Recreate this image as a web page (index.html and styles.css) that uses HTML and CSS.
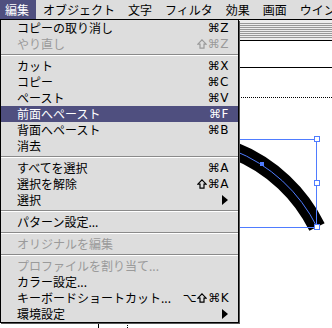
FILE: index.html
```html
<!DOCTYPE html>
<html lang="ja">
<head>
<meta charset="utf-8">
<link rel="stylesheet" href="styles.css">
</head>
<body>
<div class="screen">
  <div class="menubar">
    <span class="mb-item active">編集</span>
    <span class="mb-item">オブジェクト</span>
    <span class="mb-item">文字</span>
    <span class="mb-item">フィルタ</span>
    <span class="mb-item">効果</span>
    <span class="mb-item">画面</span>
    <span class="mb-item">ウインドウ</span>
  </div>

  <svg class="canvas" width="332" height="328" viewBox="0 0 332 328">
    <rect x="0" y="20" width="332" height="21" fill="#eeeeee"/>
    <g fill="#999999">
      <rect x="0" y="23" width="332" height="1"/>
      <rect x="0" y="25" width="332" height="1"/>
      <rect x="0" y="27" width="332" height="1"/>
      <rect x="0" y="29" width="332" height="1"/>
      <rect x="0" y="31" width="332" height="1"/>
      <rect x="0" y="33" width="332" height="1"/>
      <rect x="0" y="35" width="332" height="1"/>
      <rect x="0" y="37" width="332" height="1"/>
    </g>
    <rect x="0" y="40" width="332" height="1" fill="#000"/>
    <rect x="98" y="67" width="234" height="1" fill="#000"/>
    <rect x="98" y="67" width="1" height="261" fill="#000"/>
    <line x1="127" y1="97.5" x2="332" y2="97.5" stroke="#000" stroke-width="1" stroke-dasharray="1 1"/>
    <line x1="127.5" y1="97" x2="127.5" y2="328" stroke="#000" stroke-width="1" stroke-dasharray="1 1"/>
    <path d="M120 149.3 A158 158 0 0 1 317 227" fill="none" stroke="#000" stroke-width="17" stroke-linecap="butt"/>
    <rect x="60.5" y="139.5" width="256" height="88" fill="none" stroke="#4f7cff" stroke-width="1"/>
    <path d="M120 149.3 A158 158 0 0 1 317 227" fill="none" stroke="#4f7cff" stroke-width="1"/>
    <rect x="260" y="162" width="4" height="4" fill="#4f7cff"/>
    <g fill="#fff" stroke="#4f7cff" stroke-width="1">
      <rect x="314.5" y="136.5" width="5" height="5"/>
      <rect x="314.5" y="180.5" width="5" height="5"/>
      <rect x="314.5" y="224.5" width="5" height="5"/>
    </g>
  </svg>

  <div class="menu">
    <div class="item"><span>コピーの取り消し</span><span class="key">⌘Z</span></div>
    <div class="item dis"><span>やり直し</span><span class="key"><svg class="shift" width="10" height="10" viewBox="0 0 10 10"><path d="M5 0.8 L9.2 5.2 L7 5.2 L7 9.2 L3 9.2 L3 5.2 L0.8 5.2 Z"/></svg>⌘Z</span></div>
    <div class="sep"></div>
    <div class="item"><span>カット</span><span class="key">⌘X</span></div>
    <div class="item"><span>コピー</span><span class="key">⌘C</span></div>
    <div class="item"><span>ペースト</span><span class="key">⌘V</span></div>
    <div class="item hl"><span>前面へペースト</span><span class="key">⌘F</span></div>
    <div class="item"><span>背面へペースト</span><span class="key">⌘B</span></div>
    <div class="item"><span>消去</span></div>
    <div class="sep"></div>
    <div class="item"><span>すべてを選択</span><span class="key">⌘A</span></div>
    <div class="item"><span>選択を解除</span><span class="key"><svg class="shift" width="10" height="10" viewBox="0 0 10 10"><path d="M5 0.8 L9.2 5.2 L7 5.2 L7 9.2 L3 9.2 L3 5.2 L0.8 5.2 Z"/></svg>⌘A</span></div>
    <div class="item"><span>選択</span><span class="arrow"></span></div>
    <div class="sep"></div>
    <div class="item"><span>パターン設定...</span></div>
    <div class="sep"></div>
    <div class="item dis"><span>オリジナルを編集</span></div>
    <div class="sep"></div>
    <div class="item dis"><span>プロファイルを割り当て...</span></div>
    <div class="item"><span>カラー設定...</span></div>
    <div class="item"><span>キーボードショートカット...</span><span class="key">⌥<svg class="shift" width="10" height="10" viewBox="0 0 10 10"><path d="M5 0.8 L9.2 5.2 L7 5.2 L7 9.2 L3 9.2 L3 5.2 L0.8 5.2 Z"/></svg>⌘K</span></div>
    <div class="item"><span>環境設定</span><span class="arrow"></span></div>
  </div>
</div>
</body>
</html>
```

FILE: styles.css
```css
html, body {
  margin: 0;
  padding: 0;
  background: #fff;
}

.screen {
  position: relative;
  width: 332px;
  height: 328px;
  overflow: hidden;
  background: #fff;
  font-family: "Noto Sans CJK JP", "DejaVu Sans", sans-serif;
  font-size: 12px;
  color: #000;
}

.menubar {
  position: relative;
  z-index: 2;
  display: flex;
  height: 19px;
  border-bottom: 1px solid #000;
  background: #dddddd;
  white-space: nowrap;
}

.mb-item {
  padding: 0 6px 0 7px;
  line-height: 19px;
}

.mb-item.active {
  padding: 0 7px 0 5px;
  background: #4f4f7f;
  color: #fff;
}

.canvas {
  position: absolute;
  left: 0;
  top: 0;
}

.menu {
  position: absolute;
  z-index: 3;
  left: 0;
  top: 20px;
  width: 237px;
  background: #dddddd;
  border-left: 1px solid #000;
  border-right: 1px solid #000;
  border-bottom: 1px solid #000;
  box-shadow: 1px 1px 0 #555;
}

.item {
  display: flex;
  justify-content: space-between;
  align-items: center;
  height: 16px;
  line-height: 16px;
  padding: 0 9px 0 16px;
  white-space: nowrap;
}

.item.dis {
  color: #9a9a9a;
}

.item.hl {
  background: #4f4f7f;
  color: #fff;
}

.key {
  display: flex;
  align-items: center;
  font-family: "DejaVu Sans", sans-serif;
  font-size: 12px;
  letter-spacing: 0.5px;
}

.shift {
  margin-right: 1px;
}

.shift path {
  fill: none;
  stroke: currentColor;
  stroke-width: 1.2;
  stroke-linejoin: miter;
}

.arrow {
  width: 0;
  height: 0;
  border-top: 5px solid transparent;
  border-bottom: 5px solid transparent;
  border-left: 6px solid #000;
  margin-right: 1px;
}

.sep {
  height: 6px;
  background: linear-gradient(to bottom, transparent 2px, #8a8a8a 2px, #8a8a8a 3px, #ffffff 3px, #ffffff 4px, transparent 4px);
}
```
